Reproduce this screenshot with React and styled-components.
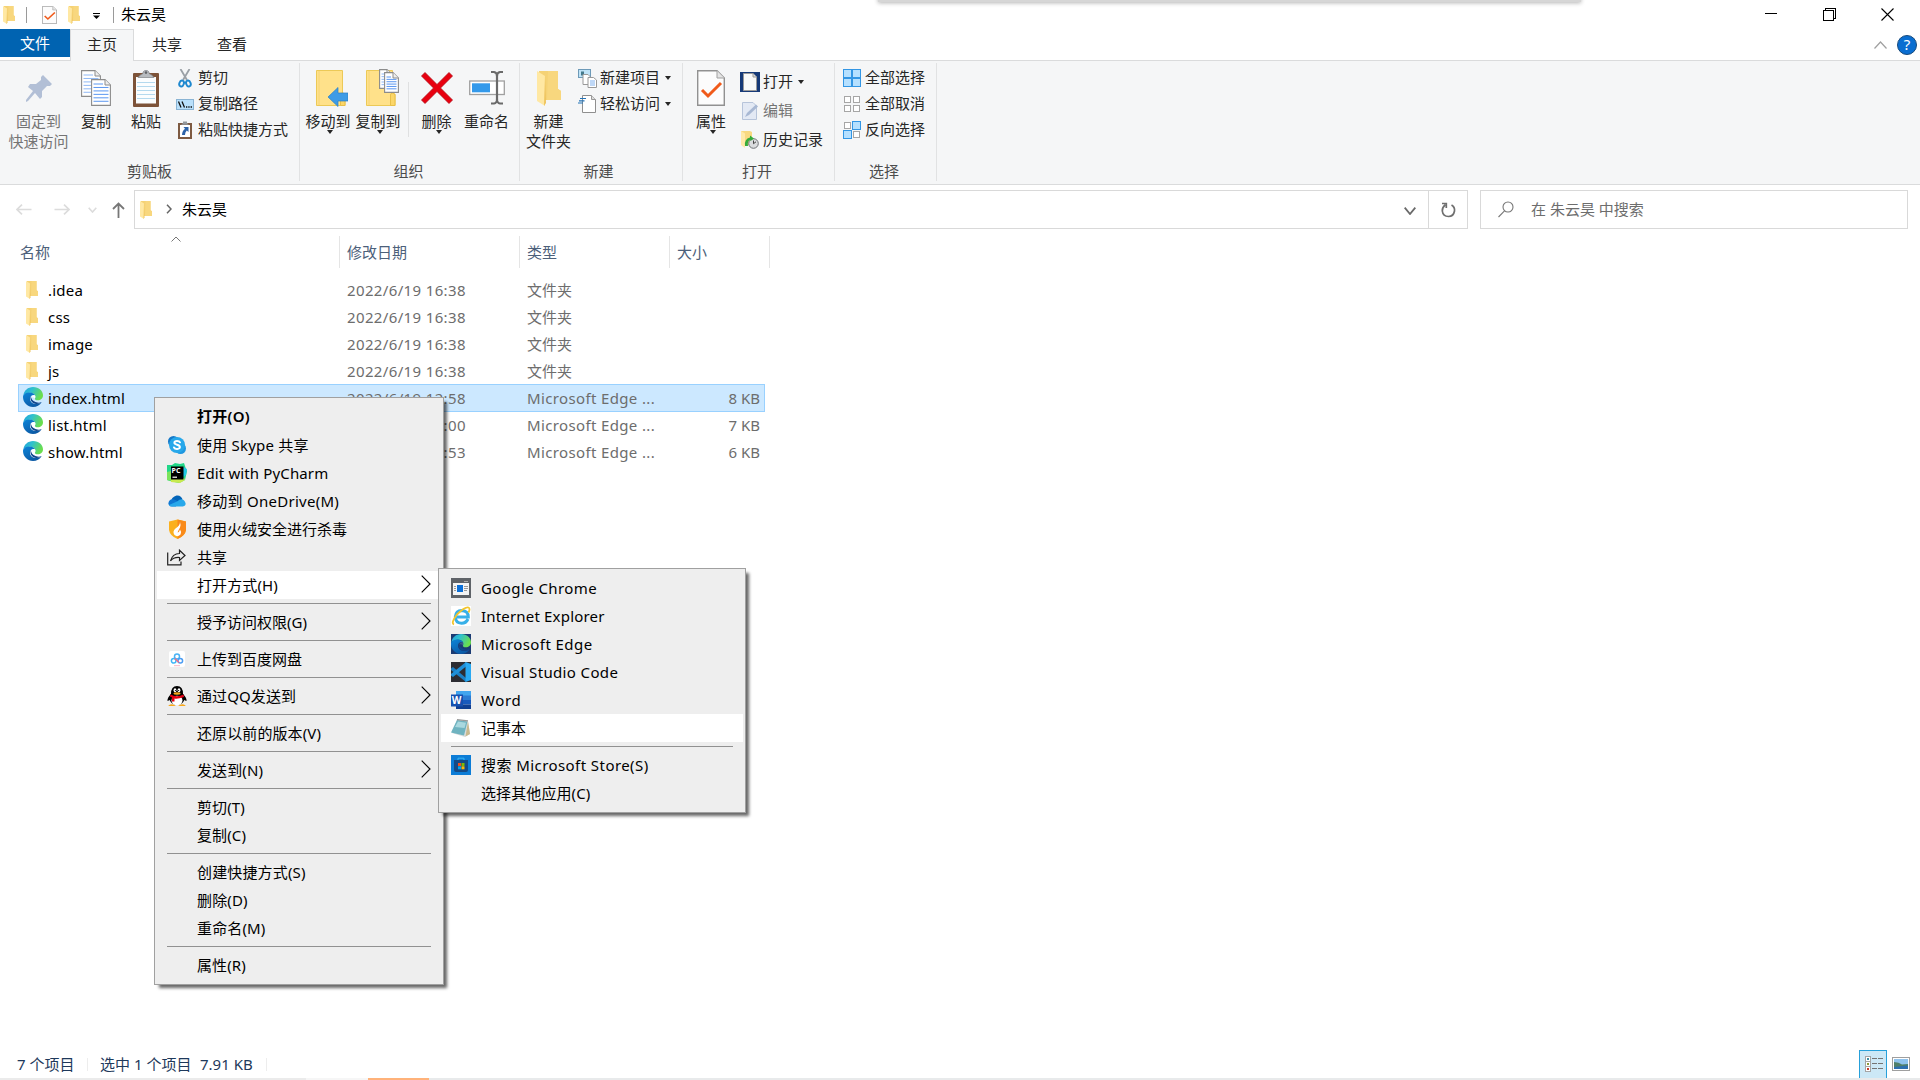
import React from "react";
import styled, { createGlobalStyle, css } from "styled-components";

const GlobalStyle = createGlobalStyle`
  * { box-sizing: border-box; }
  body {
    margin: 0;
    background: #fff;
    overflow: hidden;
    font-family: "Noto Sans", "Noto Sans CJK SC", sans-serif;
    font-size: 15px;
    line-height: 20px;
    color: #000;
  }
  svg { display: block; flex: none; }
`;

/* ---------- shell ---------- */

const Window = styled.div`
  position: relative;
  display: flex;
  flex-direction: column;
  width: 1920px;
  height: 1080px;
  background: #fff;
  overflow: hidden;
  white-space: nowrap;
`;

const TopShade = styled.div`
  position: absolute;
  left: 878px;
  top: -8px;
  width: 703px;
  height: 10px;
  background: #d6d6d6;
  box-shadow: 0 1px 4px rgba(0, 0, 0, 0.3);
`;

const TitleBar = styled.header`
  display: flex;
  align-items: flex-start;
  height: 29px;
  padding: 0 3px;
`;

const QuickAccess = styled.div`
  display: flex;
  align-items: center;
  height: 29px;
`;

const QuickSlot = styled.div`
  width: ${(p) => p.$w}px;
  display: flex;
  padding-top: ${(p) => p.$drop || 0}px;
`;

const QuickDivider = styled.div`
  width: 1px;
  height: 16px;
  background: #9a9a9a;
  margin-right: ${(p) => p.$after}px;
`;

const Title = styled.div`
  line-height: 29px;
`;

const Caption = styled.div`
  display: flex;
  margin-left: auto;
  height: 29px;
`;

const CaptionButton = styled.div`
  width: 58.5px;
  height: 28px;
  display: flex;
  align-items: center;
  justify-content: center;
`;

/* ---------- tabs ---------- */

const TabStrip = styled.nav`
  display: flex;
  height: 32px;
  border-bottom: 1px solid #dadbdc;
`;

const Tab = styled.div`
  width: ${(p) => p.$w}px;
  height: 32px;
  line-height: 30px;
  text-align: center;
  color: #262626;
  ${(p) =>
    p.$kind === "file" &&
    css`
      height: 28px;
      background: #0063b1;
      color: #fff;
      line-height: 28px;
    `}
  ${(p) =>
    p.$kind === "active" &&
    css`
      background: #f5f6f7;
      border: 1px solid #dadbdc;
      border-bottom: 0;
      line-height: 28px;
    `}
`;

const TabTools = styled.div`
  display: flex;
  align-items: center;
  gap: 10px;
  margin-left: auto;
  padding-right: 3px;
  height: 31px;
`;

const HelpBadge = styled.div`
  width: 20px;
  height: 20px;
  border-radius: 50%;
  border: 1px solid #174a7c;
  background: #0a6ed1;
  color: #fff;
  font-size: 15px;
  line-height: 17px;
  text-align: center;
`;

/* ---------- ribbon ---------- */

const RibbonBar = styled.section`
  display: flex;
  height: 124px;
  padding: 2px 0 3px;
  background: #f5f6f7;
  border-bottom: 1px solid #dadbdc;
`;

const Group = styled.div`
  display: flex;
  flex-direction: column;
  width: ${(p) => p.$w}px;
  border-right: 1px solid #e1e2e3;
`;

const GroupBody = styled.div`
  display: flex;
  height: 98px;
  padding-left: ${(p) => p.$pad}px;
`;

const GroupLabel = styled.div`
  text-align: center;
  color: #4c4c4c;
  padding-right: ${(p) => p.$nudge || 0}px;
`;

const BigBox = styled.div`
  width: ${(p) => p.$w}px;
  padding-top: 7px;
  display: flex;
  flex-direction: column;
  align-items: center;
  color: ${(p) => (p.$off ? "#747474" : "#262626")};
`;

const BigIcon = styled.div`
  height: 36px;
  display: flex;
  align-items: center;
  margin-left: ${(p) => p.$shift || 0}px;
`;

const BigText = styled.div`
  margin-top: ${(p) => (p.$first ? 5 : 0)}px;
`;

const DownArrow = styled.div`
  width: 0;
  height: 0;
  border: 3.5px solid transparent;
  border-top: 4px solid #262626;
  border-bottom: 0;
  margin-top: ${(p) => p.$up || 0}px;
  margin-left: ${(p) => p.$left || 0}px;
`;

const BodyDivider = styled.div`
  width: 1px;
  height: 55px;
  margin: 19px 0 0 5px;
  background: #dfe0e1;
`;

const SmallColumn = styled.div`
  display: flex;
  flex-direction: column;
  padding: ${(p) => p.$top}px 0 0 ${(p) => p.$left}px;
`;

const SmallBox = styled.div`
  display: flex;
  align-items: center;
  height: ${(p) => p.$h || 26}px;
  color: ${(p) => (p.$off ? "#747474" : "#262626")};
`;

const SmallIcon = styled.div`
  width: 20px;
  margin-right: 3px;
  display: flex;
  justify-content: center;
`;

const Raised = styled.div`
  padding-bottom: 2px;
`;

/* ---------- address row ---------- */

const AddressRow = styled.div`
  display: flex;
  align-items: center;
  height: 49px;
  padding: 0 12px 0 16px;
`;

const NavButtons = styled.div`
  display: flex;
  align-items: center;
  width: 118px;
`;

const NavSlot = styled.div`
  width: ${(p) => p.$w}px;
`;

const AddressBox = styled.div`
  display: flex;
  align-items: center;
  width: 1334px;
  height: 39px;
  border: 1px solid #d9d9d9;
  padding-left: 5px;
`;

const Crumb = styled.div`
  display: flex;
  align-items: center;
`;

const CrumbChevron = styled.div`
  padding: 0 10px 2px 14px;
`;

const AddressChevron = styled.div`
  margin-left: auto;
  padding: 2px 12px 0 0;
`;

const Refresh = styled.div`
  width: 39px;
  height: 37px;
  display: flex;
  align-items: center;
  justify-content: center;
  border-left: 1px solid #d9d9d9;
`;

const SearchBox = styled.div`
  display: flex;
  align-items: center;
  gap: 17px;
  width: 428px;
  height: 39px;
  margin-left: 12px;
  padding-left: 17px;
  border: 1px solid #d9d9d9;
  color: #6d6d6d;
`;

/* ---------- file list ---------- */

const List = styled.main`
  flex: 1;
  padding-top: 2px;
`;

const HeaderRow = styled.div`
  display: flex;
  height: 32px;
  margin-bottom: 8px;
`;

const HeaderCell = styled.div`
  position: relative;
  width: ${(p) => p.$w}px;
  padding-left: ${(p) => p.$pad || 7}px;
  border-right: 1px solid #e5e5e5;
  line-height: 32px;
  color: #4c607a;
`;

const SortMark = styled.div`
  position: absolute;
  left: 171px;
  top: 0;
`;

const FileRow = styled.div`
  display: flex;
  align-items: center;
  width: 747px;
  height: ${(p) => (p.$selected ? 28 : 27)}px;
  margin: 0 0 ${(p) => (p.$selected ? -1 : 0)}px 18px;
  padding-top: ${(p) => (p.$selected ? 0 : 1)}px;
  border: 1px solid ${(p) => (p.$selected ? "#99d1ff" : "transparent")};
  border-top-width: ${(p) => (p.$selected ? 1 : 0)}px;
  border-bottom-width: ${(p) => (p.$selected ? 1 : 0)}px;
  background: ${(p) => (p.$selected ? "#cce8ff" : "transparent")};
`;

const FileIcon = styled.div`
  width: 29px;
  height: 24px;
  display: flex;
  align-items: center;
  padding: 0 0 ${(p) => (p.$folder ? 0 : 2)}px ${(p) => (p.$folder ? 7 : 4)}px;
`;

const FileName = styled.div`
  width: 299px;
  letter-spacing: 0.2px;
`;

const FileMeta = styled.div`
  width: ${(p) => p.$w}px;
  color: #6d6d6d;
  text-align: ${(p) => (p.$right ? "right" : "left")};
  letter-spacing: ${(p) => p.$track || 0}px;
`;

/* ---------- status bar ---------- */

const StatusBar = styled.footer`
  display: flex;
  align-items: center;
  height: 28px;
  padding-left: 17px;
  color: #1e395b;
`;

const StatusText = styled.div`
  width: ${(p) => p.$w}px;
  padding-bottom: 1px;
`;

const StatusDivider = styled.div`
  width: 1px;
  height: 13px;
  background: #ededed;
  margin-right: ${(p) => p.$after || 0}px;
`;

const ViewSwitch = styled.div`
  display: flex;
  align-items: center;
  margin-left: auto;
  gap: 5px;
  padding-right: 10px;
`;

const ViewButton = styled.div`
  width: 28px;
  height: 28px;
  display: flex;
  align-items: center;
  padding-left: 5px;
  background: #cce8f6;
  border: 1px solid #26a0da;
  border-bottom: 0;
`;

const TaskEdge = styled.div`
  display: flex;
  height: 2px;
`;

const EdgeSegment = styled.div`
  width: ${(p) => p.$w}px;
  background: ${(p) => p.$c};
`;

/* ---------- menus ---------- */

const Menu = styled.div`
  position: absolute;
  left: ${(p) => p.$x}px;
  top: ${(p) => p.$y}px;
  width: ${(p) => p.$w}px;
  padding: 5px 2px;
  background: #eee;
  border: 1px solid #a0a0a0;
  box-shadow: 4px 4px 3px -1px rgba(0, 0, 0, 0.6);
`;

const MenuRow = styled.div`
  display: flex;
  align-items: center;
  height: 28px;
  padding: 0 10px;
  background: ${(p) => (p.$hot ? "#fff" : "transparent")};
`;

const MenuText = styled.div`
  letter-spacing: ${(p) => p.$track || 0}px;
  font-weight: ${(p) => (p.$bold ? 600 : 400)};
  padding-bottom: ${(p) => (p.$bold ? 2 : 0)}px;
`;

const MenuIcon = styled.div`
  width: 20px;
  height: 20px;
  margin-right: 10px;
  display: flex;
  align-items: center;
  justify-content: center;
`;

const MenuArrow = styled.div`
  margin: -2px 0 0 auto;
`;

const MenuLine = styled.div`
  height: 1px;
  margin: 4px 10px;
  background: #919191;
`;

/* ---------- icons ---------- */

const Folder = ({ w = 12, h = 18 }) => (
  <svg width={w} height={h} viewBox="0 0 24 35" preserveAspectRatio="none">
    <path d="M2 0H21V18L24 20V29H2Z" fill="#f5d275" />
    <path d="M11 0H21V18L24 20V29H10Z" fill="#f8d77e" />
    <path d="M0 0L8 5V35L0 30Z" fill="#ffe8a3" />
    <path d="M8 5L9 32L7 35Z" fill="#eec35c" />
  </svg>
);

const CheckDoc = ({ w, h }) => (
  <svg width={w} height={h} viewBox="0 0 28 36" preserveAspectRatio="none">
    <path d="M.7.7H20L27.3 8V35.3H.7Z" fill="#fcfcfc" stroke="#919191" strokeWidth="1.4" />
    <path d="M20 .7V8H27.3" fill="#e4e4e4" stroke="#a0a0a0" />
    <path d="M5 20L11 26L24 13" fill="none" stroke="#f05a1a" strokeWidth="3" />
  </svg>
);

const Customize = () => (
  <svg width="7" height="6" viewBox="0 0 7 6">
    <path d="M0 .5H7" stroke="#000" />
    <path d="M0 2.5H7L3.5 6Z" />
  </svg>
);

const Minimize = () => (
  <svg width="12" height="12" viewBox="0 0 12 12" shapeRendering="crispEdges">
    <path d="M0 5.5H12" stroke="#000" />
  </svg>
);

const Restore = () => (
  <svg width="13" height="13" viewBox="0 0 13 13" fill="none" stroke="#000" shapeRendering="crispEdges">
    <path d="M.5 2.5H10.5V12.5H.5ZM2.5 2V.5H12.5V10.5H11" />
  </svg>
);

const Close = () => (
  <svg width="13" height="13" viewBox="0 0 13 13">
    <path d="M.5.5L12.5 12.5M12.5.5L.5 12.5" stroke="#000" strokeWidth="1.1" />
  </svg>
);

const Pin = () => (
  <svg width="28" height="28" viewBox="0 0 28 28">
    <path d="M18 1L27 10L25 12H22L17 17L17 23L15 25L10 19L3 27L1 28L1 26L8 17L3 13L5 10H11L16 6V3Z" fill="#b2bfd6" />
  </svg>
);

const Sheet = ({ x, y, w = 19, h = 26, c = "#5a96f0", n = 6 }) => (
  <g>
    <path
      d={`M${x + 0.6} ${y + 0.6}H${x + w - 6}L${x + w - 0.6} ${y + 6}V${y + h - 0.6}H${x + 0.6}Z`}
      fill="#fff"
      stroke="#8c8c8c"
      strokeWidth="1.1"
    />
    <path d={`M${x + w - 6} ${y + 0.6}V${y + 6}H${x + w - 0.6}`} fill="#eee" stroke="#8c8c8c" />
    {Array.from({ length: n }, (_, i) => {
      const ly = y + 5 + (i * (h - 8)) / (n - 0.5);
      return <path key={i} d={`M${x + 2.5} ${ly}H${x + (ly < y + 7 ? w - 8 : w - 2.5)}`} stroke={c} />;
    })}
  </g>
);

const CopyDocs = () => (
  <svg width="30" height="36" viewBox="0 0 30 36">
    <Sheet x={0} y={0} h={27} w={20} c="#8fb8f5" />
    <Sheet x={10} y={9} h={27} w={20} />
  </svg>
);

const Paste = () => (
  <svg width="26" height="37" viewBox="0 0 26 37">
    <rect y="3" width="26" height="34" rx="1" fill="#7d5339" />
    <rect x="3" y="7" width="20" height="26.500" fill="#fbfdfe" />
    <path d="M4 12.500H22M4 16.500H22M4 20.500H22M4 24.500H22M4 28.500H22" stroke="#b4d9ee" />
    <path d="M5 7.500Q7 4.500 10 3.500V2Q13-1.500 16 2V3.500Q19 4.500 21 7.500Z" fill="#b8bcc0" stroke="#7e8286" strokeWidth=".7" />
    <circle cx="13" cy="2.600" r="1.300" fill="#616468" />
  </svg>
);

const Scissors = () => (
  <svg width="14" height="19" viewBox="0 0 14 19" fill="none">
    <path d="M2.500 0L9 11M11.500 0L5 11" stroke="#9aa0a6" strokeWidth="1.800" />
    <ellipse cx="3.600" cy="14.500" rx="2.200" ry="3" transform="rotate(20 3.600 14.500)" stroke="#1e88cf" strokeWidth="2" />
    <ellipse cx="10.400" cy="14.500" rx="2.200" ry="3" transform="rotate(-20 10.400 14.500)" stroke="#1e88cf" strokeWidth="2" />
  </svg>
);

const PathIcon = () => (
  <svg width="18" height="11" viewBox="0 0 18 11">
    <rect x=".5" y=".5" width="17" height="10" fill="#b9e0fb" stroke="#8ab4d4" />
    <path d="M2.500 2.500L5 8.500M6 2.500L8.500 8.500" stroke="#111" strokeWidth="1.300" />
    <path d="M10 8H11.300M12.300 8H13.600M14.600 8H16" stroke="#111" strokeWidth="1.300" />
  </svg>
);

const PasteLink = () => (
  <svg width="14" height="18" viewBox="0 0 14 18">
    <rect y="2" width="14" height="16" fill="#7d5a42" />
    <rect x="2" y="4" width="10" height="12" fill="#fff" />
    <path d="M3 3.800L5 2V.5H9V2L11 3.800Z" fill="#92979b" />
    <path d="M5.500 6H10.500V11L8.800 9.500Q7 11 7 14H4Q4 10 7 7.700Z" fill="#2c62a8" />
  </svg>
);

const PlainFolder = () => (
  <g>
    <path d="M.5 1.500H26.500V25H29V36.500H.5Z" fill="#ffe18a" stroke="#ecc957" />
    <path d="M3 2V36" stroke="#f6d476" />
    <path d="M24.500 36.500V26Q24.500 24 26.500 24T29 26V36.500Z" fill="#fbd668" stroke="#e9bf48" />
  </g>
);

const MoveTo = () => (
  <svg width="32" height="38" viewBox="0 0 32 38">
    <PlainFolder />
    <path d="M12 28L22 18.500V24H32V32H22V37.500Z" fill="#3d9be6" stroke="#2c80c4" strokeWidth=".7" />
  </svg>
);

const CopyTo = () => (
  <svg width="33" height="38" viewBox="0 0 33 38">
    <PlainFolder />
    <Sheet x={13} y={0} w={14} h={20} c="#8fb8f5" n={5} />
    <Sheet x={18} y={3} w={15} h={21} n={6} />
  </svg>
);

const Delete = () => (
  <svg width="32" height="32" viewBox="0 0 32 32">
    <path d="M4 .5L16 12.500L28 .5L31.500 4L19.500 16L31.500 28L28 31.500L16 19.500L4 31.500L.5 28L12.500 16L.5 4Z" fill="#e8000f" stroke="#b00a14" strokeWidth=".8" />
  </svg>
);

const Rename = () => (
  <svg width="36" height="34" viewBox="0 0 36 34" fill="none">
    <rect x=".7" y="10" width="34.600" height="13.500" fill="#fff" stroke="#a0a0a0" strokeWidth="1.300" />
    <rect x="3" y="12.300" width="18" height="9" fill="#3399ea" />
    <path d="M28 4V29" stroke="#6a6a6a" strokeWidth="2.200" />
    <path d="M22 1H25Q28 1.500 28 5Q28 1.500 31 1H34M22 32.500H25Q28 32 28 28Q28 32 31 32.500H34" stroke="#6a6a6a" strokeWidth="2" />
  </svg>
);

const NewItem = () => (
  <svg width="19" height="19" viewBox="0 0 19 19">
    <rect x=".5" y=".5" width="12" height="8" fill="#bfe3f7" stroke="#6d9ab8" />
    <rect x="3" y="2.500" width="3" height="4" fill="#447a8c" />
    <path d="M5 5.500H10L12 7.500V15.500H5Z" fill="#fff" stroke="#999" />
    <path d="M10 8.500H15.500L18.500 11V18.500H10Z" fill="#fff" stroke="#999" />
    <path d="M12 12H17M12 14H17M12 16H17" stroke="#7fb0ee" />
  </svg>
);

const EasyAccess = () => (
  <svg width="18" height="18" viewBox="0 0 18 18">
    <path d="M4.500.5H13.500L17.500 4.500V17.500H4.500Z" fill="#fff" stroke="#8f8f8f" />
    <path d="M13.500.5V4.500H17.500" fill="#ddd" stroke="#999" />
    <path d="M2 3.500H8M1 5.800H6.500M0 8H5" stroke="#2474b8" strokeWidth="1.200" />
  </svg>
);

const OpenIcon = () => (
  <svg width="20" height="20" viewBox="0 0 20 20">
    <rect width="20" height="20" fill="#173a78" />
    <path d="M3.500 1.500H13L16.500 5V18.500H3.500Z" fill="#fafafa" stroke="#9a9a9a" />
    <path d="M13 1.500V5H16.500" fill="#ddd" stroke="#9a9a9a" />
  </svg>
);

const EditIcon = () => (
  <svg width="16" height="18" viewBox="0 0 16 18">
    <path d="M.5.5H11L14.500 4V17.500H.5Z" fill="#e3e9f4" stroke="#b7c4da" />
    <path d="M3 15L5 11L14 2.500L16 4.500L7 13Z" fill="#a8b8d3" />
  </svg>
);

const History = () => (
  <svg width="18" height="18" viewBox="0 0 18 18">
    <path d="M0 0H9L11 1V14H3Z" fill="#f8d980" />
    <path d="M0 0L4 2.500V17L0 14Z" fill="#ffe9a8" />
    <circle cx="12.500" cy="12.500" r="4.800" fill="#dadcde" stroke="#6e7276" />
    <path d="M12.500 9.500V12.700L15 10.800" fill="none" stroke="#444" />
    <path d="M4 15Q3 8 9 6.500V4.500L13 7.500L9.500 10V8.800Q6 10 7 15Z" fill="#35ab3b" />
  </svg>
);

const Grid = ({ on }) => (
  <svg width="18" height="18" viewBox="0 0 18 18" shapeRendering="crispEdges">
    {[[0, 0], [9, 0], [0, 9], [9, 9]].map(([x, y], i) =>
      on[i] ? (
        <rect key={i} x={x + 0.5} y={y + 0.5} width="8" height="8" fill="#b5e0ff" stroke="#3396e4" />
      ) : (
        <rect key={i} x={x + 1.5} y={y + 1.5} width="6" height="6" fill="#fff" stroke="#a6a6a6" />
      )
    )}
  </svg>
);

const NavArrow = ({ flip }) => (
  <svg width="16" height="11" viewBox="0 0 16 11">
    <path
      d={flip ? "M.5 5.500H15M10 .7L15 5.500L10 10.300" : "M15.500 5.500H1M6 .7L1 5.500L6 10.300"}
      fill="none"
      stroke="#dcdcdc"
      strokeWidth="1.700"
    />
  </svg>
);

const UpArrow = () => (
  <svg width="13" height="16" viewBox="0 0 13 16">
    <path d="M6.500 16V1.500M1 7L6.500 1.500L12 7" fill="none" stroke="#777" strokeWidth="1.800" />
  </svg>
);

const Chevron = ({ w, h, c, s = 1.5, up }) => (
  <svg width={w} height={h} viewBox={`0 0 ${w} ${h}`}>
    <path
      d={up ? `M.5 ${h - 0.5}L${w / 2} 1L${w - 0.5} ${h - 0.5}` : `M.7 .7L${w / 2} ${h - 1}L${w - 0.7} .7`}
      fill="none"
      stroke={c}
      strokeWidth={s}
    />
  </svg>
);

const RightChevron = () => (
  <svg width="6" height="10" viewBox="0 0 6 10">
    <path d="M1 .8L5 5L1 9.200" fill="none" stroke="#666" strokeWidth="1.500" />
  </svg>
);

const RefreshIcon = () => (
  <svg width="15" height="16" viewBox="0 0 15 16" fill="none" stroke="#6f6f6f" strokeWidth="1.700">
    <path d="M10.500 3Q14 5 13.500 9Q12.500 14.500 7.500 14.500Q2 14.500 1.300 9Q1 5.500 4.500 2.500" />
    <path d="M1 1.500H5.300V6" />
  </svg>
);

const SearchIcon = () => (
  <svg width="16" height="17" viewBox="0 0 16 17" fill="none" stroke="#777" strokeWidth="1.100">
    <circle cx="10" cy="6" r="5" />
    <path d="M6.500 9.800L.5 16" />
  </svg>
);

const SubArrow = () => (
  <svg width="10" height="18" viewBox="0 0 10 18">
    <path d="M.7 .7L9 9L.7 17.300" fill="none" stroke="#000" strokeWidth="1.150" />
  </svg>
);

const EdgeIcon = ({ tile, id }) => (
  <svg width="20" height="20" viewBox="0 0 20 20">
    <defs>
      <linearGradient id={id + "a"} x1="0" y1="0" x2="1" y2=".4">
        <stop offset="0" stopColor="#1f9fdc" />
        <stop offset=".45" stopColor="#2fc0cf" />
        <stop offset="1" stopColor="#6ade4e" />
      </linearGradient>
      <linearGradient id={id + "b"} x1="0" y1="0" x2=".6" y2="1">
        <stop offset="0" stopColor="#0c84d8" />
        <stop offset="1" stopColor="#0c59a4" />
      </linearGradient>
    </defs>
    {tile && <rect width="20" height="20" fill="#1b3b73" />}
    <path d="M.3 8.500C1 3.500 5 0 10 0C16 0 20 4 20 8.300C20 11.500 17.500 13.300 15 13.300C12.500 13.300 11.500 12.300 12 11.500C13.500 9 11 5.800 7.500 5.800C4 5.800 1 7.500.3 8.500Z" fill={`url(#${id}a)`} />
    <path d="M0 10C0 7 3.500 5.600 7 5.600C9.500 5.600 11.500 7 12 8.500C9.500 7.300 7.300 9 7 11.500C6.800 14 9 17 13 17C15.500 17 17.500 16 18.500 15.200C17 18 13.500 20 10 20C4.500 20 0 15.500 0 10Z" fill={`url(#${id}b)`} />
    <path d="M8 9.300C6.500 12 8.500 16.500 13 17C16 17.200 18 16 18.700 15C17.500 15.800 15 16 12.500 15C9.500 13.800 8 12 8 9.300Z" fill="#10458c" />
    <path d="M12 8.500C10 7.800 8.300 9.300 8.300 11C9 10 10.500 10 11.800 11.500C12.500 10.500 12.500 9.500 12 8.500Z" fill="#fff" opacity={tile ? 0.15 : 0.9} />
  </svg>
);

const Skype = () => (
  <svg width="20" height="20" viewBox="0 0 20 20">
    <circle cx="6.500" cy="6.500" r="5.500" fill="#1478c8" />
    <circle cx="13.500" cy="13.500" r="5.500" fill="#1f97e0" />
    <circle cx="10" cy="10" r="8" fill="#28a8ea" />
    <path d="M13 7.300C12.300 5.800 7.500 5.400 7.400 7.800C7.400 10.200 12.900 9.300 12.900 12C12.800 14.400 8 14.500 7 12.500" fill="none" stroke="#fff" strokeWidth="2" strokeLinecap="round" />
  </svg>
);

const IconLetters = styled.text`
  font-family: "Noto Sans", sans-serif;
  font-weight: 700;
  font-size: ${(p) => p.$size}px;
  fill: #fff;
`;

const PyCharm = () => (
  <svg width="20" height="20" viewBox="0 0 20 20">
    <path d="M0 2L5 2L8 0L13 1L17 0L19 6L20 8L18 17L12 20L3 18L0 17Z" fill="#21d789" />
    <path d="M16 4L20 6L19 12L16 14Z" fill="#22c7e8" />
    <path d="M4 16L17 15L18 17L13 20L4 19Z" fill="#c9ea4f" />
    <path d="M0 9L4 8V18L0 17Z" fill="#7be35b" />
    <rect x="4" y="3.500" width="12.500" height="13" fill="#000" />
    <IconLetters x="4.600" y="9.700" $size={7}>PC</IconLetters>
    <path d="M5.500 14.200H10" stroke="#fff" strokeWidth="1.200" />
  </svg>
);

const OneDrive = () => (
  <svg width="18" height="12" viewBox="0 0 18 12">
    <path d="M3 7.500C3 2.500 7 .5 9.500 .5C12 .5 14 2.500 14.500 4.500L10 8Z" fill="#0364b8" />
    <path d="M4 11.500C-1 11.500-.5 5 4 4.300C6 4 8 5 9.500 6.500L8 11.500Z" fill="#0f78d4" />
    <path d="M9 6.500Q14 2.500 16.500 6Q19.500 10.500 15 11.500H4Q1.500 11.500 1 10Z" fill="#28a8ea" />
  </svg>
);

const Huorong = () => (
  <svg width="19" height="20" viewBox="0 0 19 20">
    <path d="M1 2.500L9.500 .5L18 2.500V11Q17 17 9.500 20Q2 17 1 11Z" fill="#fbb01e" />
    <path d="M9.500.5L18 2.500V11Q17 17 9.500 20Z" fill="#f98a1a" />
    <path d="M12 3Q12 6.500 7.500 9.500Q4 12.500 6.500 16Q9.500 18.500 12.500 15.500Q14 13 12 10.500Q11.500 13 9.500 13.500Q10.500 11 12 8.500Q13 5.500 12 3Z" fill="#fff" />
  </svg>
);

const Share = () => (
  <svg width="20" height="17" viewBox="0 0 20 17" fill="none" stroke="#222" strokeWidth="1.200">
    <path d="M.7 3.500V15.800H14V12.500" />
    <path d="M3.500 12Q5.500 4.500 12.500 4.500V1.200L18 6.500L12.500 11.500V8.500Q6.500 8 3.500 12Z" />
  </svg>
);

const BaiduDisk = () => (
  <svg width="16" height="16" viewBox="0 0 16 16" fill="none">
    <rect width="16" height="16" rx="2" fill="#fff" />
    <circle cx="8" cy="5.500" r="2.500" stroke="#49b2f5" strokeWidth="1.500" />
    <circle cx="4.700" cy="9.800" r="2.300" stroke="#3fb6f7" strokeWidth="1.500" />
    <circle cx="11.300" cy="9.800" r="2.300" stroke="#4a9cf3" strokeWidth="1.500" />
    <path d="M5.800 7.500L10 11.500" stroke="#ee6d86" strokeWidth="1.500" />
    <path d="M5 14.700H11" stroke="#f7b5c2" />
  </svg>
);

const QQ = () => (
  <svg width="20" height="20" viewBox="0 0 20 20">
    <ellipse cx="10" cy="12" rx="7.500" ry="7" />
    <path d="M4 8Q4 0 10 0T16 8Q20 12 19.500 15L17 14L3 14L.5 15Q0 12 4 8Z" />
    <ellipse cx="10" cy="14.500" rx="5.500" ry="4.800" fill="#fff" />
    <ellipse cx="8" cy="4.300" rx="1.400" ry="2" fill="#fff" />
    <ellipse cx="12" cy="4.300" rx="1.400" ry="2" fill="#fff" />
    <circle cx="8.400" cy="4.500" r=".6" />
    <circle cx="11.600" cy="4.500" r=".6" />
    <ellipse cx="10" cy="7.500" rx="3.500" ry="1.200" fill="#f7a81b" />
    <path d="M3.500 8.500Q10 12 16.500 8.500L17 11Q10 13.500 7.500 12.500V15.500H5V11.500L3 10.500Z" fill="#e60012" />
    <path d="M1.500 19.500Q5 17 9 20H1.500ZM18.500 19.500Q15 17 11 20H18.500Z" fill="#f7a81b" />
  </svg>
);

const ChromeTile = () => (
  <svg width="20" height="20" viewBox="0 0 20 20" shapeRendering="crispEdges">
    <rect width="20" height="20" fill="#5f6368" />
    <rect x="2" y="5" width="16" height="12" fill="#f4f4f4" />
    <rect x="6" y="7" width="6" height="7" fill="#0a6fd8" />
    <path d="M3 8.500H5M3 10.500H5M3 12.500H5M13 8.500H17M13 10.500H17M13 12.500H16" stroke="#999" />
    <path d="M13 3.500H17" stroke="#aaa" />
  </svg>
);

const IETile = () => (
  <svg width="20" height="20" viewBox="0 0 20 20" fill="none">
    <rect width="20" height="20" fill="#fff" />
    <path d="M17 13Q15 17.300 10.500 17.300Q4.500 17 4.300 10.800Q4.800 4.800 10.800 4.500Q17.300 4.800 17.300 11H6" stroke="#38b0e8" strokeWidth="3" />
    <path d="M3 18.500Q-.5 17 6 8.500Q14 .5 17.500 1.500Q19.500 2.500 17.500 6.500" stroke="#f3c52c" strokeWidth="1.800" />
  </svg>
);

const VSCodeTile = () => (
  <svg width="20" height="20" viewBox="0 0 20 20">
    <rect width="20" height="20" fill="#2c2c32" />
    <path d="M0 6.500L2 5L15 16V20L0 8Z" fill="#1b7fc4" />
    <path d="M0 13.500L2 15L15 4.500V0L0 12Z" fill="#1f8fd8" />
    <path d="M14.500 0L20 2V18L14.500 20Z" fill="#29a9f2" />
  </svg>
);

const Word = () => (
  <svg width="20" height="18" viewBox="0 0 20 18">
    <rect x="5" width="15" height="5" fill="#41a5ee" />
    <rect x="5" y="4.500" width="15" height="4.500" fill="#2b7cd3" />
    <rect x="5" y="9" width="15" height="4.500" fill="#185abd" />
    <rect x="5" y="13.500" width="15" height="4.500" fill="#103f91" />
    <rect y="3.500" width="12" height="12" fill="#1550b0" />
    <IconLetters x=".8" y="13" $size={10}>W</IconLetters>
  </svg>
);

const Notepad = () => (
  <svg width="20" height="18" viewBox="0 0 20 18">
    <path d="M6 1L17 2L19 15L14 18L1 14Z" fill="#d9dcdc" />
    <path d="M6 1L16.500 2.500L13 16.500L0 13.500Z" fill="#6fb3c0" />
    <path d="M7 2.500L15 3.800L13.500 9L4 8Z" fill="#a9d8df" />
    <path d="M17 2.500L19 15L14.500 17.500Z" fill="#c9b98e" />
    <path d="M6 .7L17 1.800" stroke="#999" strokeWidth="1.200" />
  </svg>
);

const StoreTile = () => (
  <svg width="20" height="20" viewBox="0 0 20 20">
    <rect width="20" height="20" fill="#0c7cd6" />
    <path d="M7 5V3.200H13V5" fill="none" stroke="#38b6f2" />
    <path d="M3 5H17V15Q17 17 15 17H5Q3 17 3 15Z" fill="#154a86" />
    <rect x="7" y="8" width="3" height="3" fill="#f25022" />
    <rect x="10.500" y="8" width="3" height="3" fill="#7fba00" />
    <rect x="7" y="11.300" width="3" height="3" fill="#00a4ef" />
    <rect x="10.500" y="11.300" width="3" height="3" fill="#ffb900" />
  </svg>
);

const DetailsIcon = () => (
  <svg width="19" height="17" viewBox="0 0 19 17">
    {["#3f8ea3", "#8b9a36", "#c83a28"].map((c, i) => (
      <g key={c}>
        <rect x=".5" y={0.5 + i * 5} width="5" height="5" fill="#fff" stroke="#a5a5a5" />
        <rect x="2" y={2 + i * 5} width="2" height="2" fill={c} />
        <path d={`M7 ${2.500 + i * 5}H12M13 ${2.500 + i * 5}H18`} stroke="#747474" />
      </g>
    ))}
  </svg>
);

const ThumbIcon = () => (
  <svg width="18" height="14" viewBox="0 0 18 14">
    <rect x=".5" y=".5" width="17" height="13" fill="#fff" stroke="#9f9f9f" />
    <rect x="2" y="2" width="14" height="10" fill="#8fc3ee" />
    <path d="M2 5Q7 5 10 7.500L16 7V12H2Z" fill="#4f7f6a" />
    <path d="M2 10L16 8.500V12H2Z" fill="#2c6fb0" />
  </svg>
);

/* ---------- composed parts ---------- */

const BigButton = ({ w, icon, lines, arrow, off, shift }) => (
  <BigBox $w={w} $off={off}>
    <BigIcon $shift={shift}>{icon}</BigIcon>
    {lines.map((t, i) => (
      <BigText key={t} $first={i === 0}>{t}</BigText>
    ))}
    {arrow && <DownArrow $up={-1} $left={4} />}
  </BigBox>
);

const SmallButton = ({ icon, text, arrow, off, h }) => (
  <SmallBox $h={h} $off={off}>
    <SmallIcon>{icon}</SmallIcon>
    <Raised>{text}</Raised>
    {arrow && <DownArrow $left={5} />}
  </SmallBox>
);

const FILES = [
  { name: ".idea", date: "2022/6/19 16:38", type: "文件夹", folder: true },
  { name: "css", date: "2022/6/19 16:38", type: "文件夹", folder: true },
  { name: "image", date: "2022/6/19 16:38", type: "文件夹", folder: true },
  { name: "js", date: "2022/6/19 16:38", type: "文件夹", folder: true },
  { name: "index.html", date: "2022/6/19 12:58", type: "Microsoft Edge ...", size: "8 KB", selected: true },
  { name: "list.html", date: "2022/6/19 13:00", type: "Microsoft Edge ...", size: "7 KB" },
  { name: "show.html", date: "2022/6/19 12:53", type: "Microsoft Edge ...", size: "6 KB" },
];

const CONTEXT = [
  { text: "打开(O)", bold: true, track: 0.3 },
  { text: "使用 Skype 共享", icon: <Skype />, track: 0.2 },
  { text: "Edit with PyCharm", icon: <PyCharm />, track: 0.13 },
  { text: "移动到 OneDrive(M)", icon: <OneDrive />, track: 0.27 },
  { text: "使用火绒安全进行杀毒", icon: <Huorong /> },
  { text: "共享", icon: <Share /> },
  { text: "打开方式(H)", sub: true, hot: true, track: 0.1 },
  null,
  { text: "授予访问权限(G)", sub: true },
  null,
  { text: "上传到百度网盘", icon: <BaiduDisk /> },
  null,
  { text: "通过QQ发送到", icon: <QQ />, sub: true, track: 0.1 },
  null,
  { text: "还原以前的版本(V)", track: 0.1 },
  null,
  { text: "发送到(N)", sub: true, track: 0.1 },
  null,
  { text: "剪切(T)", track: 0.1 },
  { text: "复制(C)", track: 0.1 },
  null,
  { text: "创建快捷方式(S)", track: 0.15 },
  { text: "删除(D)", track: 0.15 },
  { text: "重命名(M)", track: 0.15 },
  null,
  { text: "属性(R)", track: 0.1 },
];

const OPEN_WITH = [
  { text: "Google Chrome", icon: <ChromeTile />, track: 0.42 },
  { text: "Internet Explorer", icon: <IETile />, track: 0.18 },
  { text: "Microsoft Edge", icon: <EdgeIcon id="tile" tile />, track: 0.42 },
  { text: "Visual Studio Code", icon: <VSCodeTile />, track: 0.36 },
  { text: "Word", icon: <Word />, track: 0.6 },
  { text: "记事本", icon: <Notepad />, hot: true },
  null,
  { text: "搜索 Microsoft Store(S)", icon: <StoreTile />, track: 0.43 },
  { text: "选择其他应用(C)", track: 0.1 },
];

const PopupMenu = ({ x, y, w, items }) => (
  <Menu $x={x} $y={y} $w={w}>
    {items.map((it, i) =>
      it ? (
        <MenuRow key={i} $hot={it.hot}>
          <MenuIcon>{it.icon}</MenuIcon>
          <MenuText $bold={it.bold} $track={it.track}>{it.text}</MenuText>
          {it.sub && <MenuArrow><SubArrow /></MenuArrow>}
        </MenuRow>
      ) : (
        <MenuLine key={i} />
      )
    )}
  </Menu>
);

const Ribbon = () => (
  <RibbonBar>
    <Group $w={300}>
      <GroupBody $pad={8}>
        <BigButton w={61} icon={<Pin />} lines={["固定到", "快速访问"]} off />
        <BigButton w={54} icon={<CopyDocs />} lines={["复制"]} />
        <BigButton w={46} icon={<Paste />} lines={["粘贴"]} />
        <SmallColumn $top={2} $left={6}>
          <SmallButton icon={<Scissors />} text="剪切" />
          <SmallButton icon={<PathIcon />} text="复制路径" />
          <SmallButton icon={<PasteLink />} text="粘贴快捷方式" />
        </SmallColumn>
      </GroupBody>
      <GroupLabel>剪贴板</GroupLabel>
    </Group>
    <Group $w={220}>
      <GroupBody $pad={3}>
        <BigButton w={50} icon={<MoveTo />} lines={["移动到"]} arrow shift={8} />
        <BigButton w={50} icon={<CopyTo />} lines={["复制到"]} arrow shift={8} />
        <BodyDivider />
        <BigButton w={55} icon={<Delete />} lines={["删除"]} arrow />
        <BigButton w={45} icon={<Rename />} lines={["重命名"]} />
      </GroupBody>
      <GroupLabel $nudge={2}>组织</GroupLabel>
    </Group>
    <Group $w={163}>
      <GroupBody $pad={5}>
        <BigButton w={47} icon={<Folder w={24} h={35} />} lines={["新建", "文件夹"]} />
        <SmallColumn $top={2} $left={5}>
          <SmallButton icon={<NewItem />} text="新建项目" arrow />
          <SmallButton icon={<EasyAccess />} text="轻松访问" arrow />
        </SmallColumn>
      </GroupBody>
      <GroupLabel $nudge={5}>新建</GroupLabel>
    </Group>
    <Group $w={152}>
      <GroupBody $pad={5}>
        <BigButton w={46} icon={<CheckDoc w={28} h={36} />} lines={["属性"]} arrow />
        <SmallColumn $top={4} $left={6}>
          <SmallButton icon={<OpenIcon />} text="打开" arrow h={29} />
          <SmallButton icon={<EditIcon />} text="编辑" off h={29} />
          <SmallButton icon={<History />} text="历史记录" h={29} />
        </SmallColumn>
      </GroupBody>
      <GroupLabel $nudge={3}>打开</GroupLabel>
    </Group>
    <Group $w={102}>
      <GroupBody $pad={0}>
        <SmallColumn $top={2} $left={7}>
          <SmallButton icon={<Grid on={[1, 1, 1, 1]} />} text="全部选择" />
          <SmallButton icon={<Grid on={[0, 0, 0, 0]} />} text="全部取消" />
          <SmallButton icon={<Grid on={[0, 1, 1, 0]} />} text="反向选择" />
        </SmallColumn>
      </GroupBody>
      <GroupLabel $nudge={3}>选择</GroupLabel>
    </Group>
  </RibbonBar>
);

export default function App() {
  return (
    <Window>
      <GlobalStyle />
      <TitleBar>
        <QuickAccess>
          <QuickSlot $w={23}><Folder /></QuickSlot>
          <QuickDivider $after={15} />
          <QuickSlot $w={26}><CheckDoc w={15} h={18} /></QuickSlot>
          <QuickSlot $w={25}><Folder /></QuickSlot>
          <QuickSlot $w={20} $drop={2}><Customize /></QuickSlot>
          <QuickDivider $after={7} />
        </QuickAccess>
        <Title>朱云昊</Title>
        <Caption>
          <CaptionButton><Minimize /></CaptionButton>
          <CaptionButton><Restore /></CaptionButton>
          <CaptionButton><Close /></CaptionButton>
        </Caption>
      </TitleBar>
      <TabStrip>
        <Tab $kind="file" $w={70}>文件</Tab>
        <Tab $kind="active" $w={64}>主页</Tab>
        <Tab $w={66}>共享</Tab>
        <Tab $w={64}>查看</Tab>
        <TabTools>
          <Chevron w={13} h={8} c="#a0a0a0" s={1.2} up />
          <HelpBadge>?</HelpBadge>
        </TabTools>
      </TabStrip>
      <Ribbon />
      <AddressRow>
        <NavButtons>
          <NavSlot $w={38}><NavArrow /></NavSlot>
          <NavSlot $w={34}><NavArrow flip /></NavSlot>
          <NavSlot $w={24}><Chevron w={9} h={6} c="#dcdcdc" s={1.6} /></NavSlot>
          <UpArrow />
        </NavButtons>
        <AddressBox>
          <Crumb>
            <Folder />
            <CrumbChevron><RightChevron /></CrumbChevron>
            <Raised>朱云昊</Raised>
          </Crumb>
          <AddressChevron><Chevron w={12} h={8} c="#6a6a6a" s={1.8} /></AddressChevron>
          <Refresh><RefreshIcon /></Refresh>
        </AddressBox>
        <SearchBox>
          <SearchIcon />
          <Raised>在 朱云昊 中搜索</Raised>
        </SearchBox>
      </AddressRow>
      <List>
        <HeaderRow>
          <HeaderCell $w={340} $pad={20}>
            名称
            <SortMark><Chevron w={10} h={6} c="#777" s={1} up /></SortMark>
          </HeaderCell>
          <HeaderCell $w={180}>修改日期</HeaderCell>
          <HeaderCell $w={150}>类型</HeaderCell>
          <HeaderCell $w={100}>大小</HeaderCell>
        </HeaderRow>
        {FILES.map((f) => (
          <FileRow key={f.name} $selected={f.selected}>
            <FileIcon $folder={f.folder}>
              {f.folder ? <Folder /> : <EdgeIcon id={f.name.slice(0, 2)} />}
            </FileIcon>
            <FileName>{f.name}</FileName>
            <FileMeta $w={180} $track={0.36}>{f.date}</FileMeta>
            <FileMeta $w={150} $track={f.folder ? 0 : 0.36}>{f.type}</FileMeta>
            <FileMeta $w={83} $right>{f.size}</FileMeta>
          </FileRow>
        ))}
      </List>
      <StatusBar>
        <StatusText $w={70}>7 个项目</StatusText>
        <StatusDivider $after={12} />
        <StatusText $w={100}>选中 1 个项目</StatusText>
        <StatusText $w={66}>7.91 KB</StatusText>
        <StatusDivider />
        <ViewSwitch>
          <ViewButton><DetailsIcon /></ViewButton>
          <ThumbIcon />
        </ViewSwitch>
      </StatusBar>
      <TaskEdge>
        <EdgeSegment $w={306} $c="#ebebeb" />
        <EdgeSegment $w={62} $c="#f6f6f6" />
        <EdgeSegment $w={61} $c="#ffb27a" />
        <EdgeSegment $w={1491} $c="#e8eaeb" />
      </TaskEdge>
      <TopShade />
      <PopupMenu x={154} y={397} w={290} items={CONTEXT} />
      <PopupMenu x={438} y={568} w={308} items={OPEN_WITH} />
    </Window>
  );
}
